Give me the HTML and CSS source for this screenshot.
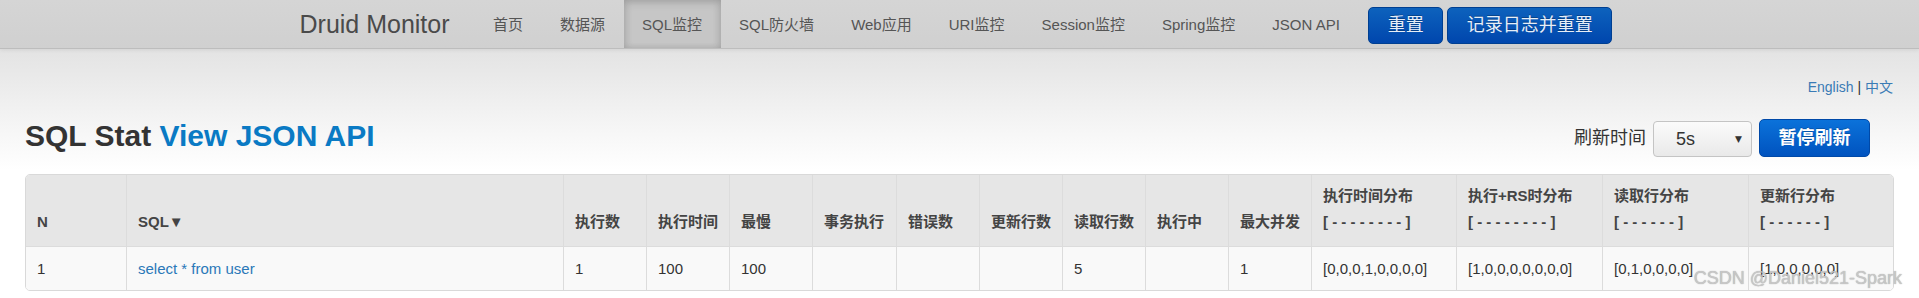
FILE: index.html
```html
<!DOCTYPE html>
<html lang="zh-CN">
<head>
<meta charset="utf-8">
<title>Druid Monitor - SQL监控</title>
<link rel="stylesheet" href="styles.css">
</head>
<body>
<div class="navbar">
  <div class="nav-inner">
    <a class="brand" href="#">Druid Monitor</a>
    <ul class="nav">
      <li><a href="#">首页</a></li>
      <li><a href="#">数据源</a></li>
      <li class="active"><a href="#">SQL监控</a></li>
      <li><a href="#">SQL防火墙</a></li>
      <li><a href="#">Web应用</a></li>
      <li><a href="#">URI监控</a></li>
      <li><a href="#">Session监控</a></li>
      <li><a href="#">Spring监控</a></li>
      <li><a href="#">JSON API</a></li>
    </ul>
    <div class="nav-actions">
      <button class="btn btn-nav">重置</button>
      <button class="btn btn-nav">记录日志并重置</button>
    </div>
  </div>
</div>

<div class="page">
  <div class="lang"><a href="#">English</a> | <a href="#">中文</a></div>
  <div class="title-row">
    <h1 class="title">SQL Stat <a href="#">View JSON API</a></h1>
    <div class="controls">
      <span class="refresh-label">刷新时间</span>
      <div class="select"><span class="select-value">5s</span><span class="select-arrow">▼</span></div>
      <button class="btn btn-primary">暂停刷新</button>
    </div>
  </div>

  <div class="table-wrap">
    <table class="stat">
      <colgroup>
        <col class="c-n"><col class="c-sql"><col class="c-num"><col class="c-num"><col class="c-num">
        <col class="c-num4"><col class="c-num"><col class="c-num"><col class="c-num"><col class="c-num"><col class="c-num">
        <col class="c-hist1"><col class="c-hist"><col class="c-hist"><col class="c-hist">
      </colgroup>
      <thead>
        <tr>
          <th>N</th>
          <th>SQL▼</th>
          <th>执行数</th>
          <th>执行时间</th>
          <th>最慢</th>
          <th>事务执行</th>
          <th>错误数</th>
          <th>更新行数</th>
          <th>读取行数</th>
          <th>执行中</th>
          <th>最大并发</th>
          <th>执行时间分布<br>[&nbsp;-&nbsp;-&nbsp;-&nbsp;-&nbsp;-&nbsp;-&nbsp;-&nbsp;-&nbsp;]</th>
          <th>执行+RS时分布<br>[&nbsp;-&nbsp;-&nbsp;-&nbsp;-&nbsp;-&nbsp;-&nbsp;-&nbsp;-&nbsp;]</th>
          <th>读取行分布<br>[&nbsp;-&nbsp;-&nbsp;-&nbsp;-&nbsp;-&nbsp;-&nbsp;]</th>
          <th>更新行分布<br>[&nbsp;-&nbsp;-&nbsp;-&nbsp;-&nbsp;-&nbsp;-&nbsp;]</th>
        </tr>
      </thead>
      <tbody>
        <tr>
          <td>1</td>
          <td><a href="#">select * from user</a></td>
          <td>1</td>
          <td>100</td>
          <td>100</td>
          <td></td>
          <td></td>
          <td></td>
          <td>5</td>
          <td></td>
          <td>1</td>
          <td>[0,0,0,1,0,0,0,0]</td>
          <td>[1,0,0,0,0,0,0,0]</td>
          <td>[0,1,0,0,0,0]</td>
          <td>[1,0,0,0,0,0]</td>
        </tr>
      </tbody>
    </table>
  </div>
</div>

<div class="watermark">CSDN @Daniel521-Spark</div>
</body>
</html>
```

FILE: styles.css
```css
* { box-sizing: border-box; }

html, body {
  margin: 0;
  padding: 0;
}

body {
  font-family: "Liberation Sans", Arial, "Noto Sans CJK SC", sans-serif;
  font-size: 15px;
  color: #333;
  background: #fff linear-gradient(to bottom, #e3e3e3 49px, #f6f6f6 130px, #ffffff 170px) no-repeat;
  height: 298px;
  overflow: hidden;
  position: relative;
}

a { text-decoration: none; }

/* ---------- navbar ---------- */
.navbar {
  height: 49px;
  background: linear-gradient(to bottom, #d5d5d5, #d0d0d0);
  border-bottom: 1px solid #bdbdbd;
  box-shadow: 0 1px 4px rgba(0, 0, 0, 0.08);
}

.nav-inner {
  width: 1320px;
  margin: 0 auto;
  height: 48px;
  display: flex;
  align-items: center;
}

.brand {
  font-size: 25px;
  line-height: 48px;
  color: #4a4a4a;
  margin-right: 25px;
  letter-spacing: 0;
}

.nav {
  list-style: none;
  margin: 0;
  padding: 0;
  display: flex;
  height: 48px;
}

.nav li a {
  display: block;
  padding: 0 18.5px;
  line-height: 50px;
  height: 48px;
  font-size: 15px;
  color: #555;
}

.nav li.active a {
  background: #c6c6c6;
  box-shadow: inset 0 3px 8px rgba(0, 0, 0, 0.12), inset 3px 0 6px rgba(0, 0, 0, 0.06), inset -3px 0 6px rgba(0, 0, 0, 0.06);
}

.nav-actions {
  display: flex;
  gap: 4px;
  margin-left: 10px;
  margin-top: 3px;
}

.btn {
  font-family: "Liberation Sans", Arial, "Noto Sans CJK SC", sans-serif;
  font-size: 18px;
  border-radius: 5px;
  cursor: pointer;
  padding: 0 18.5px;
}

.btn-nav {
  height: 37px;
  line-height: 35px;
  color: #e6eef8;
  background: linear-gradient(to bottom, #0d62bd, #0046ad);
  border: 1px solid #003f91;
  text-shadow: 0 -1px 0 rgba(0, 0, 0, 0.25);
}

/* ---------- page ---------- */
.page {
  padding: 0 25px;
}

.lang {
  margin-top: 28px;
  text-align: right;
  font-size: 14px;
  line-height: 20px;
  color: #333;
  padding-right: 1px;
}

.lang a { color: #3a7bb5; }

.title-row {
  display: flex;
  align-items: center;
  justify-content: space-between;
  margin-top: 22px;
  height: 38px;
}

.title {
  margin: 0;
  font-size: 30px;
  font-weight: bold;
  line-height: 38px;
  color: #333;
  position: relative;
  top: -2px;
}

.title a { color: #0a7ac4; }

.controls {
  display: flex;
  align-items: center;
  gap: 7px;
  margin-right: 24px;
}

.refresh-label {
  font-size: 18px;
  line-height: 24px;
  color: #333;
}

.select {
  width: 99px;
  height: 36px;
  border: 1px solid #c4c4c4;
  border-radius: 4px;
  background: linear-gradient(to bottom, #fbfbfb, #e9e9e9);
  display: flex;
  align-items: center;
  justify-content: space-between;
  padding: 0 9px 0 22px;
  margin-top: 2px;
}

.select-value {
  font-size: 18px;
  color: #333;
}

.select-arrow {
  font-family: "DejaVu Sans", sans-serif;
  font-size: 9px;
  color: #333;
}

.btn-primary {
  height: 38px;
  line-height: 36px;
  font-weight: bold;
  color: #fff;
  background: linear-gradient(to bottom, #0b72da, #0053bf);
  border: 1px solid #0049a8;
  text-shadow: 0 -1px 0 rgba(0, 0, 0, 0.2);
}

/* ---------- table ---------- */
.table-wrap {
  margin-top: 17px;
  border: 1px solid #d9d9d9;
  border-radius: 5px;
  overflow: hidden;
}

.stat {
  width: 100%;
  table-layout: fixed;
  border-collapse: separate;
  border-spacing: 0;
}

.c-n { width: 100px; }
.c-sql { width: 437px; }
.c-num { width: 83px; }
.c-num4 { width: 84px; }
.c-hist1 { width: 145px; }
.c-hist { width: 146px; }

.stat th,
.stat td {
  text-align: left;
  padding: 0 11px;
  border-left: 1px solid #dcdcdc;
  white-space: nowrap;
}

.stat th:first-child,
.stat td:first-child {
  border-left: 0;
}

.stat thead tr { height: 71px; }

.stat th {
  background: #e6e6e6;
  font-weight: bold;
  font-size: 15px;
  line-height: 26px;
  color: #444;
  vertical-align: bottom;
  padding-bottom: 11px;
}

.stat tbody tr { height: 44px; }

.stat td {
  background: #f9f9f9;
  border-top: 1px solid #dcdcdc;
  font-size: 15px;
  line-height: 22px;
  color: #333;
  vertical-align: middle;
}

.stat td a { color: #2a78b8; }

/* ---------- watermark ---------- */
.watermark {
  position: absolute;
  right: 17px;
  top: 266px;
  font-size: 18px;
  line-height: 24px;
  color: rgba(205, 205, 205, 0.85);
  text-shadow: 0 0 1px rgba(90, 90, 90, 0.6);
  pointer-events: none;
}
```
